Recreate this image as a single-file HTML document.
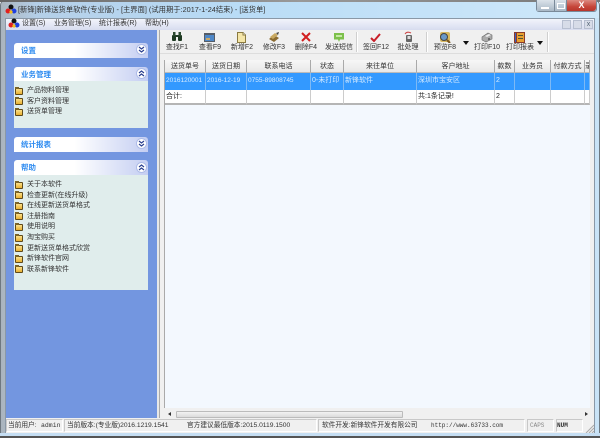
<!DOCTYPE html>
<html lang="zh">
<head>
<meta charset="utf-8">
<style>
html,body{margin:0;padding:0;width:600px;height:438px;overflow:hidden;background:#fff}
body{position:relative;font-family:"Liberation Sans","WenQuanYi Zen Hei","Noto Sans CJK SC",sans-serif;font-size:7px;color:#222}
div,svg,span{position:absolute;box-sizing:border-box}
.t{white-space:nowrap;line-height:11px;height:11px}
.hd{left:14px;width:134px;height:15px;border-radius:3px 3px 0 0;background:linear-gradient(90deg,#fff 0,#fff 45%,#c4cef2 100%);color:#2f8cf0;font-weight:bold;font-size:7.5px;line-height:15px;padding-left:7px}
.body{left:14px;width:134px;background:#e0edec}
.chev{width:11px;height:11px;border-radius:50%;background:#fff;border:1px solid #aebce8}
.it{left:27px;white-space:nowrap;font-size:7px;line-height:11px;color:#333}
.f{left:15px;width:8px;height:7px;background:linear-gradient(#fbe08a,#e8b030);border:1px solid #5f4a1a;border-radius:1px}
.f::before{content:"";position:absolute;left:-1px;top:-2px;width:4px;height:2px;background:#7a6428}
.tb{top:43px;font-size:7px;line-height:10px;white-space:nowrap;color:#333;text-align:center}
.sep{top:32px;width:2px;height:20px;background:#cfcfcf;border-right:1px solid #fff}
.hc{top:60px;height:13px;background:linear-gradient(#f7f7f7,#e8e8e8);border-right:1px solid #aaa;border-bottom:1px solid #bbb;text-align:center;line-height:13px;font-size:7px;color:#333;white-space:nowrap;overflow:hidden}
.r1{top:73px;height:17px;background:#3399ff;border-right:1px solid #7db9f5;color:#d8ecff;font-size:6.5px;line-height:16px;padding-left:1px;white-space:nowrap;overflow:hidden}
.r1.z{font-size:7px}
.r2{top:90px;height:15px;background:#fff;border-right:1px solid #ccc;border-bottom:2px solid #b5b5b5;font-size:7px;line-height:14px;padding-left:1px;white-space:nowrap}
.sb{top:419px;height:13px;border:1px solid;border-color:#c8c8c8 #fff #fff #c8c8c8}
.st{top:420px;font-size:6.7px;line-height:11px;white-space:nowrap;color:#333}
.mn{font-family:"Liberation Mono",monospace}
.m{top:18px;font-size:7px;line-height:12px;color:#333;white-space:nowrap}
</style>
</head>
<body>
<!-- window frame -->
<div style="left:0;top:0;width:600px;height:438px;background:linear-gradient(90deg,#aab4bd 0,#b4cfe8 6%,#b9dcf6 40%,#cfe8fa 100%);border-radius:5px 5px 0 0;border:1px solid #6e7880"></div>
<div style="left:0;top:0;width:600px;height:2px;background:linear-gradient(90deg,#666,#999 50%,#777)"></div>
<div style="left:0;top:433px;width:600px;height:5px;background:#c5def3;border-bottom:2px solid #555"></div>
<!-- title -->
<svg style="left:5px;top:4px" width="12" height="11" viewBox="0 0 12 11"><circle cx="6" cy="3" r="2.500" fill="#111"/><circle cx="3" cy="7" r="2.500" fill="#e02020"/><circle cx="9" cy="7" r="2.500" fill="#2040e0"/><circle cx="6" cy="8" r="1.600" fill="#f0c020"/></svg>
<div class="t" style="left:18px;top:4px;font-size:7.3px;color:#333">[新锋]新锋送货单软件(专业版) - [主界面] (试用期于:2017-1-24结束) - [送货单]</div>
<!-- window buttons -->
<div style="left:536px;top:0;width:61px;height:12px;border:1px solid #7a8a99;border-top:0;border-radius:0 0 3px 3px;background:#b8c6d4"></div>
<div style="left:537px;top:0;width:18px;height:11px;background:linear-gradient(#dbe3ea,#a9b8c6);border-right:1px solid #7a8a99"></div>
<div style="left:541px;top:7px;width:8px;height:2px;background:#fff;border:0"></div>
<div style="left:555px;top:0;width:12px;height:11px;background:linear-gradient(#dbe3ea,#a9b8c6);border-right:1px solid #7a8a99"></div>
<div style="left:557px;top:3px;width:8px;height:6px;border:1px solid #fff"></div>
<div style="left:567px;top:0;width:29px;height:11px;background:linear-gradient(#dc8a80,#c6463a 60%,#b8362c);border-radius:0 0 3px 0;color:#fff;text-align:center;font-size:9px;line-height:10px;font-weight:bold">X</div>
<!-- inner area -->
<div style="left:5px;top:18px;width:590px;height:415px;background:#f0f0f0;border:1px solid #8a98a6"></div>
<!-- menu -->
<div style="left:6px;top:19px;width:588px;height:11px;background:linear-gradient(#f2f4fb,#d7dcef)"></div>
<svg style="left:8px;top:18px" width="12" height="11" viewBox="0 0 12 11"><circle cx="6" cy="3" r="2.500" fill="#111"/><circle cx="3" cy="7" r="2.500" fill="#e02020"/><circle cx="9" cy="7" r="2.500" fill="#2040e0"/><circle cx="6" cy="8" r="1.600" fill="#f0c020"/></svg>
<div class="m" style="left:22px">设置(S)</div>
<div class="m" style="left:54px">业务管理(S)</div>
<div class="m" style="left:99px">统计报表(R)</div>
<div class="m" style="left:145px">帮助(H)</div>
<div style="left:562px;top:20px;width:9px;height:9px;background:#d7dce8;border:1px solid #b7bfd0"></div>
<div style="left:573px;top:20px;width:9px;height:9px;background:#d7dce8;border:1px solid #b7bfd0"></div>
<div style="left:584px;top:20px;width:9px;height:9px;background:#d7dce8;border:1px solid #b7bfd0;color:#567;font-size:7px;line-height:7px;text-align:center">x</div>
<!-- sidebar -->
<div style="left:6px;top:30px;width:151px;height:388px;background:#7396e0"></div>
<div style="left:157px;top:30px;width:3px;height:388px;background:#e8e8e8;border-right:1px solid #aaa"></div>

<div class="hd" style="top:43px">设置</div>
<div class="chev" style="left:136px;top:44px"></div>
<svg style="left:138px;top:46px" width="7" height="7" viewBox="0 0 7 7" fill="none" stroke="#2a3f8f" stroke-width="1.200"><path d="M1 1l2.500 2L6 1M1 4l2.500 2L6 4"/></svg>

<div class="hd" style="top:67px">业务管理</div>
<div class="chev" style="left:136px;top:68px"></div>
<svg style="left:138px;top:70px" width="7" height="7" viewBox="0 0 7 7" fill="none" stroke="#2a3f8f" stroke-width="1.200"><path d="M1 3l2.500-2L6 3M1 6l2.500-2L6 6"/></svg>
<div class="body" style="top:81px;height:47px"></div>
<div class="f" style="top:88px"></div><div class="it" style="top:85px">产品物料管理</div>
<div class="f" style="top:98px"></div><div class="it" style="top:96px">客户资料管理</div>
<div class="f" style="top:109px"></div><div class="it" style="top:106px">送货单管理</div>

<div class="hd" style="top:137px">统计报表</div>
<div class="chev" style="left:136px;top:138px"></div>
<svg style="left:138px;top:140px" width="7" height="7" viewBox="0 0 7 7" fill="none" stroke="#2a3f8f" stroke-width="1.200"><path d="M1 1l2.500 2L6 1M1 4l2.500 2L6 4"/></svg>

<div class="hd" style="top:160px">帮助</div>
<div class="chev" style="left:136px;top:162px"></div>
<svg style="left:138px;top:164px" width="7" height="7" viewBox="0 0 7 7" fill="none" stroke="#2a3f8f" stroke-width="1.200"><path d="M1 3l2.500-2L6 3M1 6l2.500-2L6 6"/></svg>
<div class="body" style="top:175px;height:115px"></div>
<div class="f" style="top:182px"></div><div class="it" style="top:179px">关于本软件</div>
<div class="f" style="top:192px"></div><div class="it" style="top:190px">检查更新(在线升级)</div>
<div class="f" style="top:203px"></div><div class="it" style="top:200px">在线更新送货单格式</div>
<div class="f" style="top:213px"></div><div class="it" style="top:211px">注册指南</div>
<div class="f" style="top:224px"></div><div class="it" style="top:221px">使用说明</div>
<div class="f" style="top:235px"></div><div class="it" style="top:232px">淘宝购买</div>
<div class="f" style="top:245px"></div><div class="it" style="top:243px">更新送货单格式欣赏</div>
<div class="f" style="top:256px"></div><div class="it" style="top:253px">新锋软件官网</div>
<div class="f" style="top:266px"></div><div class="it" style="top:264px">联系新锋软件</div>

<!-- toolbar -->
<div style="left:160px;top:30px;width:434px;height:24px;background:#f0f0f0;border-bottom:1px solid #ddd"></div>
<svg style="left:171px;top:32px" width="12" height="10" viewBox="0 0 12 10"><rect x="1" y="3" width="4" height="6" rx="1" fill="#1e3a22"/><rect x="7" y="3" width="4" height="6" rx="1" fill="#1e3a22"/><rect x="2" y="0" width="2.500" height="4" fill="#2c4a30"/><rect x="7.500" y="0" width="2.500" height="4" fill="#2c4a30"/><rect x="4.500" y="3" width="3" height="2" fill="#1e3a22"/></svg>
<svg style="left:204px;top:33px" width="11" height="9" viewBox="0 0 11 9"><rect width="11" height="9" fill="#555d68"/><rect x="1" y="2" width="9" height="6" fill="#4f88c8"/><rect x="2" y="5" width="4" height="2" fill="#c9a868"/></svg>
<svg style="left:237px;top:32px" width="9" height="11" viewBox="0 0 9 11"><path d="M0.500 .5H6L8.500 3V10.500H.5Z" fill="#f5e6a8" stroke="#8a7a40"/><path d="M6 .5V3H8.500" fill="#fff" stroke="#8a7a40"/></svg>
<svg style="left:268px;top:32px" width="12" height="11" viewBox="0 0 12 11"><path d="M1 7L6 3l5 3-5 4Z" fill="#8a6a30"/><path d="M2 5L7 1l3 2-5 4Z" fill="#c8a860"/><path d="M8 1L11 0 10 3Z" fill="#444"/></svg>
<svg style="left:301px;top:32px" width="10" height="10" viewBox="0 0 10 10" fill="none" stroke="#d22020" stroke-width="2"><path d="M1 1L9 9M9 1L1 9"/></svg>
<svg style="left:334px;top:33px" width="10" height="9" viewBox="0 0 10 9"><path d="M0 0H10V6.500H6L5 9 4 6.500H0Z" fill="#7cc04a"/><rect x="2" y="2" width="6" height="2" fill="#c5e8a5"/></svg>
<svg style="left:370px;top:33px" width="11" height="9" viewBox="0 0 11 9" fill="none" stroke="#c81e28" stroke-width="2"><path d="M1 5L4 8L10 1"/></svg>
<svg style="left:403px;top:31px" width="11" height="12" viewBox="0 0 11 12"><path d="M2 3Q4 0 8 2" fill="none" stroke="#c44" stroke-width="1"/><rect x="3" y="4" width="6" height="7" rx="1" fill="#666"/><rect x="4.500" y="5" width="3" height="3" fill="#ddd"/></svg>
<svg style="left:439px;top:32px" width="12" height="11" viewBox="0 0 12 11"><rect x="1" y="0" width="10" height="10" rx="2" fill="#d8b860"/><circle cx="5" cy="5" r="3.500" fill="#6a98c8" stroke="#444"/><path d="M8 8l3 3" stroke="#7a5520" stroke-width="2"/></svg>
<svg style="left:481px;top:32px" width="12" height="11" viewBox="0 0 12 11"><path d="M1 5L7 1l4 2v4L5 10 1 8Z" fill="#aaa" stroke="#666" stroke-width=".6"/><path d="M4 4L8 2l2 1-4 2Z" fill="#eee"/><circle cx="8" cy="7" r="1" fill="#555"/></svg>
<svg style="left:514px;top:32px" width="11" height="11" viewBox="0 0 11 11"><rect width="11" height="11" fill="#8a3a2a"/><rect x="3" y="1" width="7" height="9" fill="#e8a030"/><rect x="1" y="1" width="1" height="9" fill="#3a60c0"/><rect x="4" y="3" width="5" height="1" fill="#553"/><rect x="4" y="6" width="5" height="1" fill="#553"/></svg>
<div class="tb" style="left:162px;width:30px">查找F1</div>
<div class="tb" style="left:195px;width:30px">查看F9</div>
<div class="tb" style="left:227px;width:30px">新增F2</div>
<div class="tb" style="left:259px;width:30px">修改F3</div>
<div class="tb" style="left:291px;width:30px">删除F4</div>
<div class="tb" style="left:322px;width:34px">发送短信</div>
<div class="tb" style="left:360px;width:32px">签回F12</div>
<div class="tb" style="left:392px;width:32px">批处理</div>
<div class="tb" style="left:430px;width:30px">预览F8</div>
<div class="tb" style="left:472px;width:30px">打印F10</div>
<div class="tb" style="left:503px;width:34px">打印报表</div>
<div class="sep" style="left:356px"></div>
<div class="sep" style="left:426px"></div>
<div class="sep" style="left:547px"></div>
<div style="left:463px;top:41px;width:0;height:0;border:3px solid transparent;border-top:4px solid #111;border-bottom:0"></div>
<div style="left:537px;top:41px;width:0;height:0;border:3px solid transparent;border-top:4px solid #111;border-bottom:0"></div>

<!-- grid container -->
<div style="left:160px;top:54px;width:434px;height:364px;background:#f0f0f0"></div>
<div style="left:164px;top:60px;width:426px;height:348px;background:#f3f8fe;border-left:1px solid #aaa"></div>
<div class="hc" style="left:165px;width:41px">送货单号</div>
<div class="hc" style="left:206px;width:41px">送货日期</div>
<div class="hc" style="left:247px;width:64px">联系电话</div>
<div class="hc" style="left:311px;width:33px">状态</div>
<div class="hc" style="left:344px;width:73px">来往单位</div>
<div class="hc" style="left:417px;width:78px">客户地址</div>
<div class="hc" style="left:495px;width:20px">款数</div>
<div class="hc" style="left:515px;width:36px">业务员</div>
<div class="hc" style="left:551px;width:34px">付款方式</div>
<div class="hc" style="left:585px;width:5px;text-align:left">录</div>

<div class="r1" style="left:165px;width:41px">2016120001</div>
<div class="r1" style="left:206px;width:41px">2016-12-19</div>
<div class="r1" style="left:247px;width:64px">0755-89808745</div>
<div class="r1 z" style="left:311px;width:33px">0-未打印</div>
<div class="r1 z" style="left:344px;width:73px">新锋软件</div>
<div class="r1 z" style="left:417px;width:78px">深圳市宝安区</div>
<div class="r1 z" style="left:495px;width:20px">2</div>
<div class="r1" style="left:515px;width:36px"></div>
<div class="r1" style="left:551px;width:34px"></div>
<div class="r1" style="left:585px;width:5px"></div>

<div class="r2" style="left:165px;width:41px">合计:</div>
<div class="r2" style="left:206px;width:41px"></div>
<div class="r2" style="left:247px;width:64px"></div>
<div class="r2" style="left:311px;width:33px"></div>
<div class="r2" style="left:344px;width:73px"></div>
<div class="r2" style="left:417px;width:78px">共:1条记录!</div>
<div class="r2" style="left:495px;width:20px">2</div>
<div class="r2" style="left:515px;width:36px"></div>
<div class="r2" style="left:551px;width:34px"></div>
<div class="r2" style="left:585px;width:5px"></div>

<!-- scrollbar -->
<div style="left:164px;top:408px;width:426px;height:10px;background:#f0f0f0"></div>
<div style="left:176px;top:411px;width:227px;height:7px;background:linear-gradient(#f2f2f2,#dcdcdc);border:1px solid #bbb;border-radius:1px"></div>
<div style="left:168px;top:412px;width:0;height:0;border:2px solid transparent;border-right:3px solid #333;border-left:0"></div>
<div style="left:585px;top:412px;width:0;height:0;border:2px solid transparent;border-left:3px solid #333;border-right:0"></div>

<!-- status bar -->
<div style="left:6px;top:418px;width:588px;height:15px;background:#f0f0f0"></div>
<div class="sb" style="left:6px;width:57px"></div>
<div class="sb" style="left:64px;width:253px"></div>
<div class="sb" style="left:318px;width:207px"></div>
<div class="sb" style="left:527px;width:27px"></div>
<div class="sb" style="left:556px;width:27px"></div>
<div class="st" style="left:8px">当前用户:</div>
<div class="st mn" style="left:41px;font-size:6.500px">admin</div>
<div class="st" style="left:67px">当前版本:(专业版)2016.1219.1541</div>
<div class="st" style="left:187px">官方建议最低版本:2015.0119.1500</div>
<div class="st" style="left:322px">软件开发:新锋软件开发有限公司</div>
<div class="st mn" style="left:431px;font-size:6px">http://www.63733.com</div>
<div class="st mn" style="left:530px;font-size:6px;color:#888">CAPS</div>
<div class="st mn" style="left:556px;font-size:6px;font-weight:bold;padding-left:1px">NUM</div>
<svg style="left:585px;top:424px" width="10" height="9" viewBox="0 0 10 9" stroke="#aaa" fill="none"><path d="M9 1L1 9M9 4L4 9M9 7L7 9"/></svg>
<div style="left:595px;top:18px;width:4px;height:415px;background:#c9e3f6"></div>
</body>
</html>
